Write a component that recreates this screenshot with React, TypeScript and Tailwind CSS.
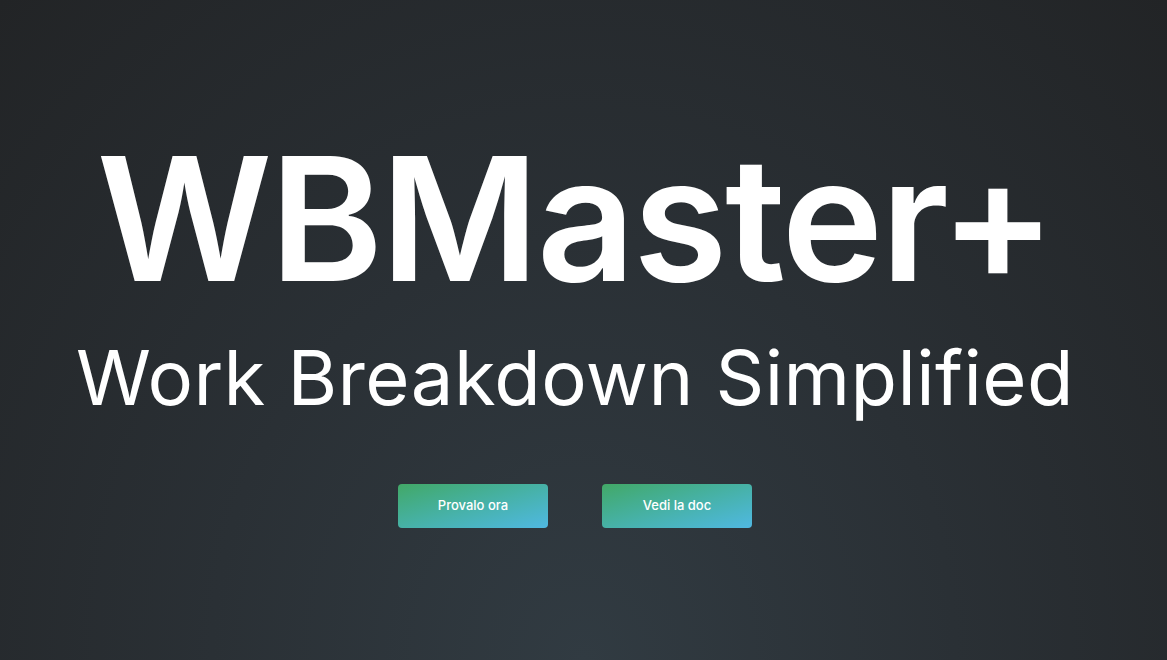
import React from 'react';

const App: React.FC = () => {
  return (
    <div
      className="w-full h-[660px] overflow-hidden pr-[17px] flex flex-col items-center text-white bg-[radial-gradient(ellipse_at_50%_100%,#313b42_0%,#2a3035_45%,#222426_100%)]"
      style={{ fontFamily: 'Inter, "Noto Sans", sans-serif' }}
    >
      <h1 className="mt-[118px] text-[172px] leading-[200px] font-semibold tracking-[-2.5px]">WBMaster+</h1>
      <h2 className="mt-[14px] text-[76px] leading-[90px] font-normal tracking-[0.4px]">Work Breakdown Simplified</h2>
      <div className="mt-[62px] flex gap-[54px]">
        <button className="w-[150px] h-[44px] rounded-[4px] text-[13px] font-medium bg-gradient-to-br from-[#42a866] to-[#50b8e2]">
          Provalo ora
        </button>
        <button className="w-[150px] h-[44px] rounded-[4px] text-[13px] font-medium bg-gradient-to-br from-[#42a866] to-[#50b8e2]">
          Vedi la doc
        </button>
      </div>
    </div>
  );
};

export default App;
